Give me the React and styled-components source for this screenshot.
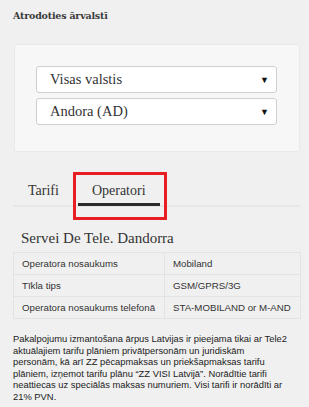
import React from "react"
import styled, {createGlobalStyle} from "styled-components"

const Global = createGlobalStyle`
  body {
    margin: 0;
    background: #f0f0f0;
    font-family: "Liberation Sans", Arial, sans-serif;
    color: #333;
  }
`;

const Page = styled.div`
  width: 309px;
  padding: 9px 9px 0 13px;
  box-sizing: border-box;
`;

const Heading = styled.div`
  font-family: "DejaVu Serif", "Liberation Serif", serif;
  font-weight: bold;
  font-size: 9.5px;
  line-height: 14px;
  color: #3a3a3a;
  letter-spacing: -0.2px;
`;

const Card = styled.div`
  margin: 21px 0 0 1px;
  background: #f7f7f7;
  border: 1px solid #e9e9e9;
  border-radius: 2px;
  padding: 21px 22px 26px 21px;
  display: flex;
  flex-direction: column;
  gap: 5px;
`;

const Select = styled.div`
  height: 27px;
  background: #fff;
  border: 1px solid #cfcfcf;
  border-radius: 3px;
  box-sizing: border-box;
  display: flex;
  align-items: center;
  justify-content: space-between;
  padding: 0 7px 0 13px;
  font-family: "Liberation Serif", serif;
  font-size: 14.5px;
  color: #333;
`;

const Arrow = styled.span`
  font-size: 9px;
  color: #111;
`;

const Tabs = styled.div`
  margin-top: 28px;
  display: flex;
  border-bottom: 2px solid #e6e6e6;
  padding-left: 15px;
  gap: 19px;
`;

const Tab = styled.div`
  font-family: "Liberation Serif", serif;
  font-size: 14px;
  line-height: 16px;
  color: #333;
  padding: 3px 0 6px;
  position: relative;
  ${p => p.active && `
    padding: 3px 14px 6px;
    &::after {
      content: "";
      position: absolute;
      left: 0;
      right: 0;
      bottom: -1px;
      height: 3px;
      background: #2a2a2a;
    }
    &::before {
      content: "";
      position: absolute;
      left: -5px;
      right: -7px;
      top: -8px;
      bottom: -15px;
      border: 3px solid #e81e25;
    }
  `}
`;

const Operator = styled.div`
  margin: 21px 0 4px 8px;
  font-family: "Liberation Serif", serif;
  font-size: 15px;
  line-height: 20px;
  color: #333;
`;

const Table = styled.table`
  width: 288px;
  border-collapse: collapse;
  font-size: 9.7px;
  color: #333;
  td {
    border: 1px solid #e3e3e3;
    height: 21px;
    padding: 0 8px;
  }
  td:first-child {
    width: 134px;
  }
`;

const Note = styled.p`
  margin: 14px 0 0;
  font-size: 9.4px;
  line-height: 11.6px;
  color: #222;
  width: 286px;
`;

const rows = [
  ["Operatora nosaukums", "Mobiland"],
  ["Tīkla tips", "GSM/GPRS/3G"],
  ["Operatora nosaukums telefonā", "STA-MOBILAND or M-AND"],
];

const App = () => (
  <Page>
    <Global/>
    <Heading>Atrodoties ārvalstī</Heading>
    <Card>
      <Select>Visas valstis<Arrow>▼</Arrow></Select>
      <Select>Andora (AD)<Arrow>▼</Arrow></Select>
    </Card>
    <Tabs>
      <Tab>Tarifi</Tab>
      <Tab active>Operatori</Tab>
    </Tabs>
    <Operator>Servei De Tele. Dandorra</Operator>
    <Table>
      <tbody>
        {rows.map(r => (
          <tr key={r[0]}><td>{r[0]}</td><td>{r[1]}</td></tr>
        ))}
      </tbody>
    </Table>
    <Note>
      Pakalpojumu izmantošana ārpus Latvijas ir pieejama tikai ar Tele2 aktuālajiem tarifu plāniem privātpersonām un juridiskām<br/>personām, kā arī ZZ pēcapmaksas un priekšapmaksas tarifu plāniem, izņemot tarifu plānu “ZZ VISI Latvijā”. Norādītie tarifi neattiecas uz speciālās maksas numuriem. Visi tarifi ir norādīti ar 21% PVN.
    </Note>
  </Page>
);

export default App;
